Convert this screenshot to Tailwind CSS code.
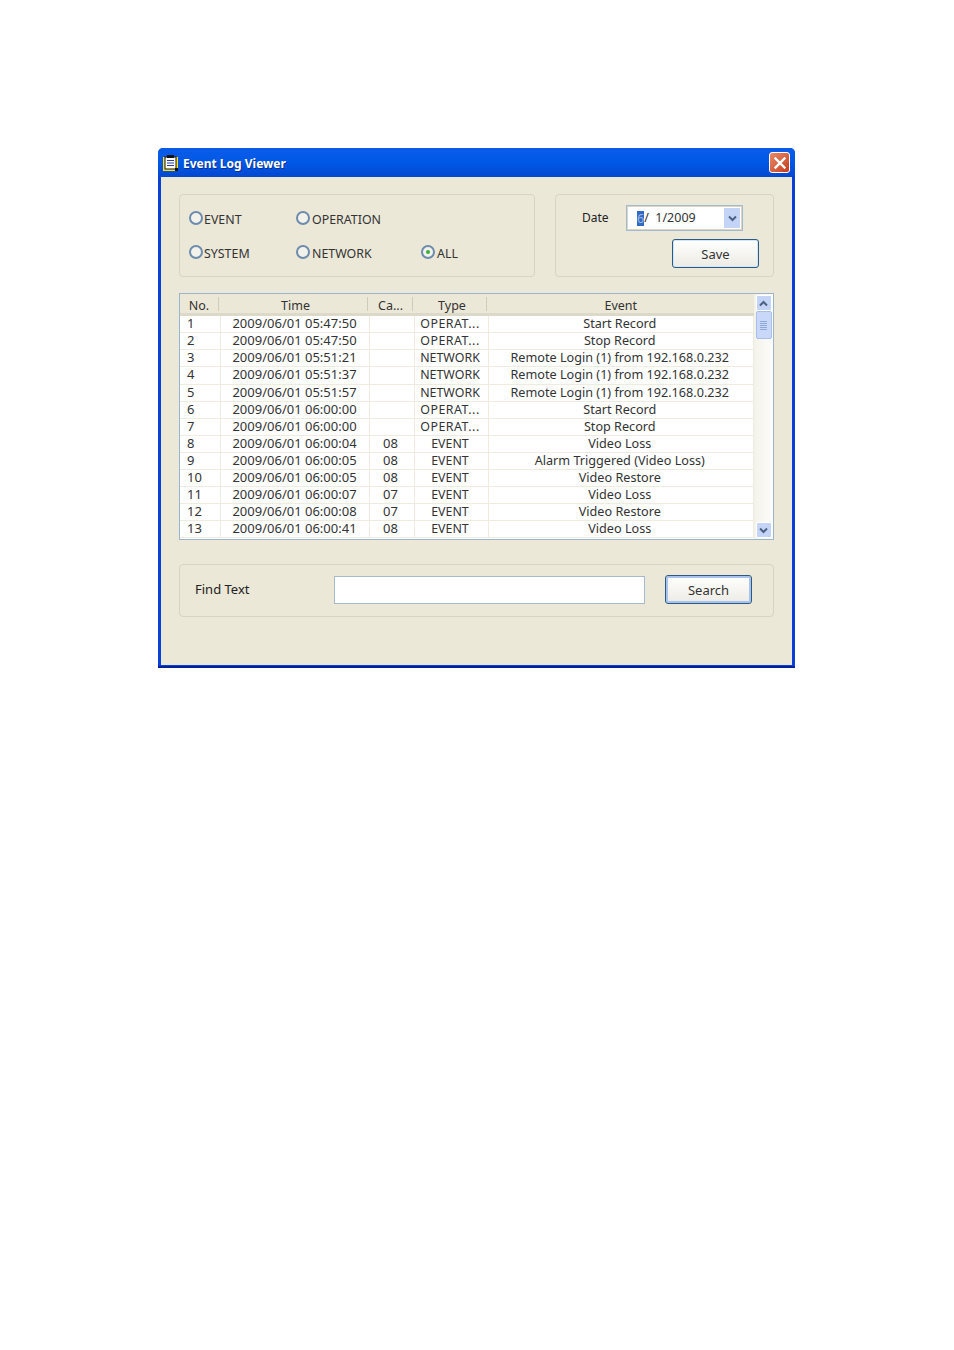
<!DOCTYPE html>
<html lang="en">
<head>
    <meta charset="UTF-8">
    <title>Event Log Viewer</title>
    <script src="https://cdn.jsdelivr.net/npm/@tailwindcss/browser@4"></script>
</head>
<body class="bg-white h-[1350px] pt-[148px] pl-[158px] font-['Noto_Sans',sans-serif] text-[13px] text-[#222]">
    <!-- window -->
    <div class="w-[637px] h-[520px] flex flex-col rounded-t-[5px] overflow-hidden bg-[#0a3fd8]">
        <div class="h-[29px] shrink-0 flex items-center pl-[5px] pr-[5px] bg-gradient-to-b from-[#0a5ce8] via-[#0058e6] to-[#0348d0]">
            <svg class="w-[15px] h-[16px] shrink-0" viewBox="0 0 15 16">
                <rect x="0" y="2" width="15" height="14" fill="#f5e020"/>
                <rect x="2" y="2" width="11" height="12" fill="#fff" stroke="#111"/>
                <rect x="4" y="0" width="7" height="3" fill="#111"/>
                <path d="M4 5.5h7M4 8h7M4 10.5h7" stroke="#2a3f9a" stroke-width="1.2"/>
                <rect x="12" y="13" width="3" height="3" fill="#111"/>
            </svg>
            <span class="ml-[5px] mt-[2px] font-bold text-[12px] text-white [text-shadow:1px_1px_0_#0a2f90]">Event Log Viewer</span>
            <div class="ml-auto w-[21px] h-[21px] rounded-[3px] border border-white bg-gradient-to-br from-[#e88a68] to-[#c5391a] flex items-center justify-center">
                <svg class="w-[14px] h-[14px]" viewBox="0 0 14 14"><path d="M2.5 2.5l9 9M11.5 2.5l-9 9" stroke="#fff" stroke-width="2.4" stroke-linecap="square"/></svg>
            </div>
        </div>

        <!-- client area -->
        <div class="flex-1 mx-[3px] mb-[3px] bg-[#ebe8d8] pl-[18px] pt-[17px] flex flex-col">
            <div class="flex gap-[20px]">
                <div class="w-[356px] h-[83px] rounded-[4px] border border-[#d8d4c0] relative">
                    <div class="grid grid-cols-[107px_125px_auto] grid-rows-[34px_34px] pl-[9px] pt-[6px] text-[12.4px] text-[#333]">
                        <label class="flex items-center"><span class="w-[14px] h-[14px] mr-px rounded-full border-2 border-[#6d8cae] bg-[#f2f1ea] shrink-0"></span><span class="pt-[4px]">EVENT</span></label>
                        <label class="flex items-center"><span class="w-[14px] h-[14px] mr-[2px] rounded-full border-2 border-[#6d8cae] bg-[#f2f1ea] shrink-0"></span><span class="pt-[4px]">OPERATION</span></label>
                        <span></span>
                        <label class="flex items-center"><span class="w-[14px] h-[14px] mr-px rounded-full border-2 border-[#6d8cae] bg-[#f2f1ea] shrink-0"></span><span class="pt-[4px]">SYSTEM</span></label>
                        <label class="flex items-center"><span class="w-[14px] h-[14px] mr-[2px] rounded-full border-2 border-[#6d8cae] bg-[#f2f1ea] shrink-0"></span><span class="pt-[4px]">NETWORK</span></label>
                        <label class="flex items-center"><span class="w-[14px] h-[14px] mr-[2px] rounded-full border-2 border-[#6d8cae] bg-[#f2f1ea] shrink-0 flex items-center justify-center"><span class="w-[4px] h-[4px] rounded-full bg-[#3cb03c]"></span></span><span class="pt-[4px]">ALL</span></label>
                    </div>
                </div>
                <div class="w-[219px] h-[83px] rounded-[4px] border border-[#d8d4c0] pt-[10px] pl-[26px]">
                    <div class="flex items-center h-[26px]">
                        <span class="w-[44px] text-[12px]">Date</span>
                        <div class="w-[117px] h-[26px] border border-[#a5b9cf] outline-1 -outline-offset-2 outline-[#d9d6c8] bg-white flex items-center pl-[10px] pr-[2px] text-[12.5px] text-[#333]">
                            <span class="bg-[#316ac5] text-[#9db8e0] leading-[15px]">6</span><span>/&nbsp;&nbsp;1/2009</span>
                            <div class="ml-auto w-[16px] h-[20px] bg-[#c4d4f6] flex items-center justify-center">
                                <svg class="w-[9px] h-[7px]" viewBox="0 0 9 7"><path d="M1 1.5l3.5 3.5L8 1.5" fill="none" stroke="#4d6185" stroke-width="2"/></svg>
                            </div>
                        </div>
                    </div>
                    <div class="flex justify-end pr-[14px] mt-[8px]">
                        <button class="w-[87px] h-[29px] pt-[2px] rounded-[3px] border border-[#2f5a80] bg-gradient-to-b from-white to-[#ecebe4] shadow-[inset_0_0_0_1px_#cee7ff] text-[#333]">Save</button>
                    </div>
                </div>
            </div>

            <!-- log list -->
            <div class="w-[595px] h-[247px] mt-[16px] border border-[#9db5cc] bg-white flex overflow-hidden text-[#333]">
                <div class="w-[574px] shrink-0 overflow-hidden">
                    <table class="w-[574px] table-fixed border-collapse text-center">
                        <colgroup><col class="w-[40px]"><col class="w-[149px]"><col class="w-[45px]"><col class="w-[74px]"><col></colgroup>
                        <thead>
                            <tr class="h-[20px] bg-[#ebe8d8] border-b-[3px] border-[#dcd9c8] text-[12.5px] [&_th]:pt-[4px] [&_th]:leading-[13px]">
                                <th class="font-normal relative pr-[2px]">No.<span class="absolute right-[1px] top-[3px] h-[14px] w-px bg-[#cfcbb8]"></span></th>
                                <th class="font-normal relative pl-[2px]">Time<span class="absolute right-[1px] top-[3px] h-[14px] w-px bg-[#cfcbb8]"></span></th>
                                <th class="font-normal relative pr-[2px]">Ca...<span class="absolute right-[1px] top-[3px] h-[14px] w-px bg-[#cfcbb8]"></span></th>
                                <th class="font-normal relative pl-[2px]">Type<span class="absolute right-[1px] top-[3px] h-[14px] w-px bg-[#cfcbb8]"></span></th>
                                <th class="font-normal">Event</th>
                            </tr>
                        </thead>
                        <tbody class="[&_td]:border-r [&_td]:border-b [&_td]:border-[#efecdf] [&_td]:pr-[2px] [&_td]:pb-px [&_td]:leading-[15px] [&_td:first-child]:text-left [&_td:first-child]:pl-[7px] [&_tr]:h-[17px] [&_tr:nth-child(4)]:h-[18px] [&_td:nth-child(2)]:pr-0 [&_td:nth-child(4)]:text-[12.4px] [&_td:nth-child(5)]:text-[12.65px]">
                            <tr><td>1</td><td>2009/06/01 05:47:50</td><td></td><td class="tracking-[0.5px]">OPERAT...</td><td>Start Record</td></tr>
                            <tr><td>2</td><td>2009/06/01 05:47:50</td><td></td><td class="tracking-[0.5px]">OPERAT...</td><td>Stop Record</td></tr>
                            <tr><td>3</td><td>2009/06/01 05:51:21</td><td></td><td>NETWORK</td><td>Remote Login (1) from 192.168.0.232</td></tr>
                            <tr><td>4</td><td>2009/06/01 05:51:37</td><td></td><td>NETWORK</td><td>Remote Login (1) from 192.168.0.232</td></tr>
                            <tr><td>5</td><td>2009/06/01 05:51:57</td><td></td><td>NETWORK</td><td>Remote Login (1) from 192.168.0.232</td></tr>
                            <tr><td>6</td><td>2009/06/01 06:00:00</td><td></td><td class="tracking-[0.5px]">OPERAT...</td><td>Start Record</td></tr>
                            <tr><td>7</td><td>2009/06/01 06:00:00</td><td></td><td class="tracking-[0.5px]">OPERAT...</td><td>Stop Record</td></tr>
                            <tr><td>8</td><td>2009/06/01 06:00:04</td><td>08</td><td>EVENT</td><td>Video Loss</td></tr>
                            <tr><td>9</td><td>2009/06/01 06:00:05</td><td>08</td><td>EVENT</td><td>Alarm Triggered (Video Loss)</td></tr>
                            <tr><td>10</td><td>2009/06/01 06:00:05</td><td>08</td><td>EVENT</td><td>Video Restore</td></tr>
                            <tr><td>11</td><td>2009/06/01 06:00:07</td><td>07</td><td>EVENT</td><td>Video Loss</td></tr>
                            <tr><td>12</td><td>2009/06/01 06:00:08</td><td>07</td><td>EVENT</td><td>Video Restore</td></tr>
                            <tr><td>13</td><td>2009/06/01 06:00:41</td><td>08</td><td>EVENT</td><td>Video Loss</td></tr>
                        </tbody>
                    </table>
                </div>
                <!-- scrollbar -->
                <div class="flex-1 bg-gradient-to-r from-[#f3f2ea] to-[#fdfdfa] flex flex-col items-center">
                    <div class="w-[16px] h-[16px] mt-[1px] rounded-[2px] border border-white bg-[#c4d4f6] flex items-center justify-center">
                        <svg class="w-[9px] h-[7px]" viewBox="0 0 9 7"><path d="M1 5.5l3.5-3.5L8 5.5" fill="none" stroke="#4d6185" stroke-width="2"/></svg>
                    </div>
                    <div class="w-[16px] h-[28px] rounded-[2px] border border-[#a9bfe8] bg-[#c9d8f8] flex flex-col items-center justify-center gap-px">
                        <span class="w-[7px] h-px bg-[#8ea8d8]"></span><span class="w-[7px] h-px bg-[#8ea8d8]"></span><span class="w-[7px] h-px bg-[#8ea8d8]"></span><span class="w-[7px] h-px bg-[#8ea8d8]"></span><span class="w-[7px] h-px bg-[#8ea8d8]"></span>
                    </div>
                    <div class="mt-auto mb-px w-[16px] h-[16px] rounded-[2px] border border-white bg-[#c4d4f6] flex items-center justify-center">
                        <svg class="w-[9px] h-[7px]" viewBox="0 0 9 7"><path d="M1 1.5l3.5 3.5L8 1.5" fill="none" stroke="#4d6185" stroke-width="2"/></svg>
                    </div>
                </div>
            </div>

            <!-- find -->
            <div class="w-[595px] h-[53px] mt-[24px] pb-[2px] rounded-[4px] border border-[#d8d4c0] flex items-center pl-[15px]">
                <span class="w-[139px]">Find Text</span>
                <input type="text" class="w-[311px] h-[28px] bg-white border border-[#a5b9cf]">
                <button class="ml-[20px] w-[87px] h-[29px] pt-[2px] rounded-[3px] border border-[#2f5a80] bg-gradient-to-b from-white to-[#ecebe4] shadow-[inset_0_0_0_2px_#a8c4ee] text-[#333]">Search</button>
            </div>
        </div>
        <div class="h-0 shadow-[0_-1px_0_1px_#00209c]"></div>
    </div>
</body>
</html>
